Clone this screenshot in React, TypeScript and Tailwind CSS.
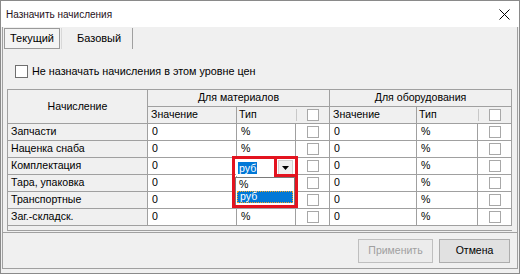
import React from 'react';

const ROWS = ['Запчасти', 'Наценка снаба', 'Комплектация', 'Тара, упаковка', 'Транспортные', 'Заг.-складск.'];

const line = 'border-[#a0a0a0]';

function Box({ className = '' }: { className?: string }) {
  return <div className={`w-[12px] h-[12px] bg-white border border-[#a8a8a8] ${className}`} />;
}

// rows 2..4 of "Тип" are covered by the open combo
function DataRow({ name, hideType }: { name: string; hideType?: boolean }) {
  const cell = `h-[17px] border-r border-b ${line} flex items-center`;
  return (
    <>
      <div className={`${cell} bg-[#f0f0f0] pl-[3px]`}>{name}</div>
      <div className={`${cell} bg-white pl-[4px]`}>0</div>
      <div className={`${cell} bg-white pl-[4px]`}>{hideType ? '' : '%'}</div>
      <div className={`${cell} bg-white justify-center`}><Box /></div>
      <div className={`${cell} bg-white pl-[4px]`}>0</div>
      <div className={`${cell} bg-white pl-[4px]`}>%</div>
      <div className={`${cell} bg-white justify-center`}><Box /></div>
    </>
  );
}

export default function App() {
  return (
    <div
      className="w-[520px] h-[274px] border border-[#8a8a8a] bg-[#f0f0f0] flex flex-col text-[10.6px] text-black"
      style={{ fontFamily: '"Liberation Sans", Arial, sans-serif' }}
    >
      {/* title bar */}
      <div className="h-[26px] bg-white flex items-center justify-between pl-[5px] pr-[9px] shrink-0">
        <span className="text-[10px] text-[#1e1020]">Назначить начисления</span>
        <svg width="11" height="11" viewBox="0 0 11 11" className="text-black">
          <path d="M0.5 0.5 L10.5 10.5 M10.5 0.5 L0.5 10.5" stroke="currentColor" strokeWidth="1" />
        </svg>
      </div>

      <div className={`mx-[1px] h-[242px] border-x border-b ${line} flex flex-col`}>
        <div className={`h-[206px] border-b ${line} flex flex-col shrink-0`}>
          {/* tabs */}
          <div className="flex items-stretch h-[21px] mt-[1px] pl-[1px] text-[11px]">
            <div className="w-[56px] border border-[#9a9a9a] bg-[#f4f4f4] flex items-center pl-[5px]">
              Текущий
            </div>
            <div className="w-[2px] border-r border-[#d8d8d8]" />
            <div className={`w-[71px] border-r ${line} flex items-center pl-[15px]`}>Базовый</div>
          </div>

          {/* option */}
          <div className="flex items-center gap-[4px] pl-[12px] mt-[15px] h-[14px]">
            <div className="w-[13px] h-[13px] bg-white border border-[#6f6f6f]" />
            <span className="text-[10.8px]">Не назначать начисления в этом уровне цен</span>
          </div>

          {/* grid */}
          <div className={`relative ml-[4px] mt-[11px] w-[505px] h-[142px] border-l border-t border-b ${line} bg-[#f0f0f0]`}>
            <div className="grid grid-cols-[140px_89px_59px_34px_87px_61px_34px]">
              <div className={`row-span-2 border-r border-b ${line} flex items-center justify-center`}>Начисление</div>
              <div className={`col-span-3 h-[17px] border-r border-b ${line} flex items-center justify-center`}>Для материалов</div>
              <div className={`col-span-3 h-[17px] border-r border-b ${line} flex items-center justify-center`}>Для оборудования</div>

              <div className={`h-[17px] border-r border-b ${line} flex items-center pl-[3px]`}>Значение</div>
              <div className={`h-[17px] border-b ${line} flex items-center pl-[2px]`}>Тип</div>
              <div className={`h-[17px] border-r border-b ${line} flex items-center`}>
                <div className="w-px h-[12px] bg-[#c8c8c8]" />
                <Box className="ml-[10px]" />
              </div>
              <div className={`h-[17px] border-r border-b ${line} flex items-center pl-[3px]`}>Значение</div>
              <div className={`h-[17px] border-b ${line} flex items-center pl-[2px]`}>Тип</div>
              <div className={`h-[17px] border-r border-b ${line} flex items-center`}>
                <div className="w-px h-[12px] bg-[#c8c8c8]" />
                <Box className="ml-[10px]" />
              </div>

              {ROWS.map((r, i) => (
                <DataRow key={r} name={r} hideType={i >= 2 && i <= 4} />
              ))}
            </div>

            {/* open combo */}
            <div className="absolute left-[228px] top-[69px] w-[58px] h-[17px] bg-white flex items-center">
              <span className="ml-[2px] px-[1px] h-[12px] leading-[12px] bg-[#0078d7] text-white">руб</span>
              <div className="ml-auto mr-[1px] w-[15px] h-[15px] bg-[#f0f0f0] border border-[#d0d0d0] flex items-center justify-center">
                <svg width="7" height="4" viewBox="0 0 7 4">
                  <path d="M0 0 H7 L3.5 4 Z" fill="#000" />
                </svg>
              </div>
            </div>
            <div className="absolute left-[227px] top-[87px] w-[60px] h-[29px] bg-white border border-[#7a7a7a] flex flex-col">
              <div className="h-[13px] flex items-center pl-[3px]">%</div>
              <div className="mx-[1px] h-[12px] bg-[#0078d7] text-white flex items-center pl-[2px] border border-dotted border-[#f5a623]">руб</div>
            </div>
            <div className="absolute left-[224px] top-[66px] w-[66px] h-[52px] border-[3px] border-[#e3131f]" />
            <div className="absolute left-[266px] top-[66px] w-[24px] h-[21px] border-[3px] border-[#e3131f]" />
          </div>
        </div>

        {/* buttons */}
        <div className="flex-1 flex items-start justify-end gap-[6px] pr-[7px] pt-[6px] text-[10.5px]">
          <button className="w-[75px] h-[24px] border border-[#bfbfbf] bg-[#ececec] text-[#a0a0a0]">Применить</button>
          <button className="w-[71px] h-[24px] border border-[#adadad] bg-[#e1e1e1]">Отмена</button>
        </div>
      </div>
    </div>
  );
}
